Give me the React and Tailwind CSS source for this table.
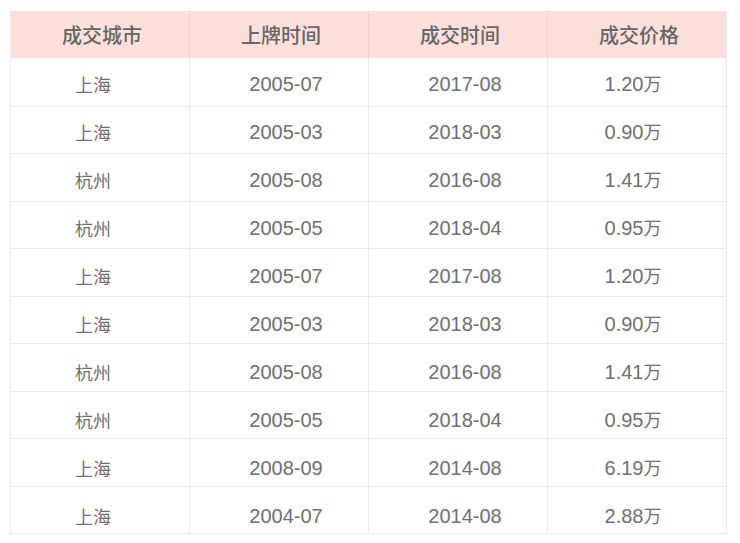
import React from "react";

const rows = [
  ["上海", "2005-07", "2017-08", "1.20万"],
  ["上海", "2005-03", "2018-03", "0.90万"],
  ["杭州", "2005-08", "2016-08", "1.41万"],
  ["杭州", "2005-05", "2018-04", "0.95万"],
  ["上海", "2005-07", "2017-08", "1.20万"],
  ["上海", "2005-03", "2018-03", "0.90万"],
  ["杭州", "2005-08", "2016-08", "1.41万"],
  ["杭州", "2005-05", "2018-04", "0.95万"],
  ["上海", "2008-09", "2014-08", "6.19万"],
  ["上海", "2004-07", "2014-08", "2.88万"],
];

const headers = ["成交城市", "上牌时间", "成交时间", "成交价格"];
const bodyPad = ["pr-[14px]", "pl-[14px]", "pl-[14px]", "pr-[8px]"];
const rowShift = [
  "translate-y-[0px]",
  "translate-y-[0px]",
  "translate-y-[1px]",
  "translate-y-[1px]",
  "translate-y-[2px]",
  "translate-y-[2px]",
  "translate-y-[3px]",
  "translate-y-[3px]",
  "translate-y-[4px]",
  "translate-y-[4px]",
];

function Cell({ text }) {
  const parts = text.match(/[\u4e00-\u9fff]+|[^\u4e00-\u9fff]+/g) || [];
  return (
    <>
      {parts.map((p, i) =>
        /[\u4e00-\u9fff]/.test(p) ? (
          <span key={i} className="text-[18px]" style={{ fontFamily: '"Noto Sans CJK SC", sans-serif' }}>
            {p}
          </span>
        ) : (
          <span key={i} className="text-[20px]" style={{ fontFamily: '"Liberation Sans", sans-serif' }}>
            {p}
          </span>
        )
      )}
    </>
  );
}

export default function App() {
  return (
    <div className="w-[740px] h-[543px] bg-white pt-[11px] pl-[10px]">
      <div className="w-[717px] border-l border-r border-b border-[#ececec]">
        <div className="grid grid-cols-[179px_179px_179px_1fr] h-[47px] bg-[#fde0dc]">
          {headers.map((h, i) => (
            <div
              key={h}
              className={`flex items-center justify-center pl-[4px] text-[20px] font-medium text-[#666] ${
                i < 3 ? "border-r border-[#f3d0cb]" : ""
              }`}
              style={{ fontFamily: '"Noto Sans CJK SC", sans-serif' }}
            >
              {h}
            </div>
          ))}
        </div>
        {rows.map((r, ri) => (
          <div
            key={ri}
            className={`grid grid-cols-[179px_179px_179px_1fr] h-[47.5px] ${
              ri > 0 ? "border-t border-[#ececec]" : ""
            }`}
          >
            {r.map((c, ci) => (
              <div
                key={ci}
                className={`flex items-center justify-center pt-[4px] leading-none text-[#707070] ${bodyPad[ci]} ${
                  ci < 3 ? "border-r border-[#ececec]" : ""
                }`}
              >
                <span className={`flex items-baseline ${rowShift[ri]}`}>
                  <Cell text={c} />
                </span>
              </div>
            ))}
          </div>
        ))}
      </div>
    </div>
  );
}
